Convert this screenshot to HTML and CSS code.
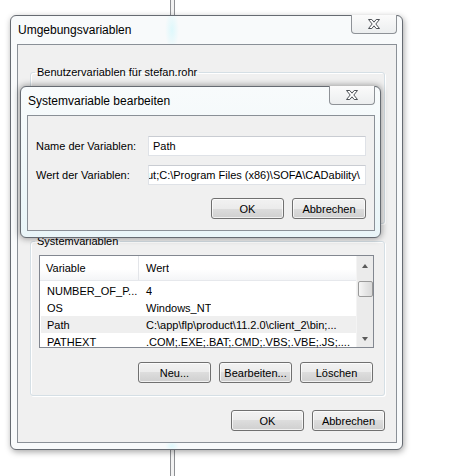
FILE: index.html
```html
<!DOCTYPE html>
<html lang="de">
<head>
    <meta charset="UTF-8">
    <title>Umgebungsvariablen</title>
    <link rel="stylesheet" href="styles.css">
</head>
<body>
    <div class="desk">
        <div class="window">
            <div class="titlebar">
                <span class="title">Umgebungsvariablen</span>
                <div class="close">
                    <svg width="12" height="10" viewBox="0 0 12 10"><path d="M0.5 0.5H3.8L6 3.2L8.2 0.5H11.5L7.8 5L11.5 9.5H8.2L6 6.8L3.8 9.5H0.5L4.2 5Z" fill="#fff" stroke="#4d5156" stroke-width="1" stroke-linejoin="round"/></svg>
                </div>
            </div>
            <div class="client">
                <fieldset class="group group-user">
                    <legend>Benutzervariablen für stefan.rohr</legend>
                </fieldset>

                <fieldset class="group group-system">
                    <legend>Systemvariablen</legend>
                    <div class="list">
                        <div class="list-body">
                            <div class="list-head">
                                <div class="col col-name">Variable</div>
                                <div class="col col-value">Wert</div>
                            </div>
                            <div class="row">
                                <div class="col col-name">NUMBER_OF_P...</div>
                                <div class="col col-value">4</div>
                            </div>
                            <div class="row">
                                <div class="col col-name">OS</div>
                                <div class="col col-value">Windows_NT</div>
                            </div>
                            <div class="row row-selected">
                                <div class="col col-name">Path</div>
                                <div class="col col-value">C:\app\flp\product\11.2.0\client_2\bin;...</div>
                            </div>
                            <div class="row">
                                <div class="col col-name">PATHEXT</div>
                                <div class="col col-value">.COM;.EXE;.BAT;.CMD;.VBS;.VBE;.JS;....</div>
                            </div>
                        </div>
                        <div class="scrollbar">
                            <span class="arrow arrow-up"></span>
                            <span class="thumb"></span>
                            <span class="arrow arrow-down"></span>
                        </div>
                    </div>
                    <div class="actions">
                        <button class="button">Neu...</button>
                        <button class="button">Bearbeiten...</button>
                        <button class="button">Löschen</button>
                    </div>
                </fieldset>

                <div class="actions actions-main">
                    <button class="button">OK</button>
                    <button class="button">Abbrechen</button>
                </div>
            </div>

            <!-- modal dialog on top of the window -->
            <div class="window dialog">
                <div class="titlebar">
                    <span class="title">Systemvariable bearbeiten</span>
                    <div class="close">
                        <svg width="12" height="10" viewBox="0 0 12 10"><path d="M0.5 0.5H3.8L6 3.2L8.2 0.5H11.5L7.8 5L11.5 9.5H8.2L6 6.8L3.8 9.5H0.5L4.2 5Z" fill="#fff" stroke="#4d5156" stroke-width="1" stroke-linejoin="round"/></svg>
                    </div>
                </div>
                <div class="client dialog-client">
                    <div class="form">
                        <label class="form-label">Name der Variablen:</label>
                        <div class="field">Path</div>
                        <label class="form-label">Wert der Variablen:</label>
                        <div class="field field-scrolled"><span>ut;C:\Program Files (x86)\SOFA\CADability\</span></div>
                    </div>
                    <div class="actions actions-dialog">
                        <button class="button">OK</button>
                        <button class="button">Abbrechen</button>
                    </div>
                </div>
            </div>
        </div>
    </div>
</body>
</html>
```

FILE: styles.css
```css
body {
    margin: 0;
    background: #fff;
    font-family: "Liberation Sans", Arial, sans-serif;
    font-size: 11px;
    line-height: 16px;
    color: #000;
}

.desk {
    width: 456px;
    height: 476px;
    padding-top: 15px;
    box-sizing: border-box;
    overflow: hidden;
    background-image: linear-gradient(to right,
        transparent 170px, #8d8f93 170px, #8d8f93 171px,
        #f2f2f2 171px, #f2f2f2 174px,
        #8d8f93 174px, #8d8f93 175px, transparent 175px);
}

.window {
    position: relative;
    margin-left: 10px;
    width: 393px;
    height: 435px;
    box-sizing: border-box;
    padding: 0 5px 6px 6px;
    border: 1px solid #666b72;
    border-radius: 6px;
    background-color: #f8fafb;
    background-image:
        radial-gradient(7px 20px at 161px 14px, rgba(200, 246, 252, 0.55), transparent),
        radial-gradient(7px 5px at 161px 430px, rgba(200, 246, 252, 0.55), transparent);
    box-shadow: 1px 2px 6px rgba(0, 0, 0, 0.35);
}

.titlebar {
    display: flex;
    align-items: flex-start;
    height: 28px;
}

.title {
    padding: 6px 0 0 1px;
    font-size: 12px;
}

.close {
    margin-left: auto;
    margin-top: -1px;
    width: 46px;
    height: 19px;
    box-sizing: border-box;
    display: flex;
    align-items: center;
    justify-content: center;
    border: 1px solid #8e9297;
    border-top: none;
    border-radius: 0 0 4px 4px;
    background: linear-gradient(#fbfbfb, #eceeef);
}

.client {
    height: 399px;
    box-sizing: border-box;
    border: 1px solid #8a9097;
    background: #f0f0f0;
    padding: 19px 11px 0 12px;
}

.group {
    margin: 0;
    padding: 6px 10px 12px 8px;
    border: 1px solid #d5dfe5;
    border-radius: 3px;
    box-shadow: inset 1px 1px 0 #fff, 1px 1px 0 #fff;
    min-width: 0;
}

.group legend {
    margin-left: -4px;
    padding: 0 2px;
}

.group-user {
    height: 160px;
    box-sizing: border-box;
    margin-bottom: 9px;
}

.list {
    display: flex;
    height: 93px;
    box-sizing: border-box;
    border: 1px solid #828790;
    background: #fff;
}

.list-body {
    flex: 1;
    min-width: 0;
}

.list-head {
    display: flex;
    height: 24px;
    align-items: center;
    background: linear-gradient(#fff 55%, #f4f5f7);
    border-bottom: 1px solid #e6e8ec;
    margin-bottom: 1px;
}

.list-head .col-name {
    border-right: 1px solid #e3e5e9;
    height: 24px;
    line-height: 24px;
}

.row {
    display: flex;
    height: 17px;
    align-items: center;
    margin-left: 1px;
}

.row-selected {
    background: #efefef;
}

.col {
    white-space: nowrap;
    overflow: hidden;
}

.col-name {
    width: 99px;
    flex: none;
    padding-left: 6px;
    box-sizing: border-box;
}

.row .col-name {
    width: 98px;
}

.col-value {
    padding-left: 7px;
}

.scrollbar {
    width: 17px;
    flex: none;
    display: flex;
    flex-direction: column;
    align-items: center;
    background: #ebebeb;
    border-left: 1px solid #f4f4f4;
    box-sizing: border-box;
}

.arrow {
    width: 0;
    height: 0;
    border-left: 3.5px solid transparent;
    border-right: 3.5px solid transparent;
}

.arrow-up {
    margin-top: 8px;
    border-bottom: 4px solid #5a5a5a;
}

.arrow-down {
    margin-top: auto;
    margin-bottom: 6px;
    border-top: 4px solid #5a5a5a;
}

.thumb {
    width: 15px;
    height: 16px;
    margin-top: 13px;
    box-sizing: border-box;
    border: 1px solid #9a9a9a;
    border-radius: 2px;
    background: linear-gradient(to right, #f6f6f6, #e6e6e6 50%, #d9d9d9);
}

.actions {
    display: flex;
    justify-content: flex-end;
    gap: 8px;
    margin-top: 14px;
    margin-right: 1px;
}

.actions-main {
    margin-top: 14px;
    margin-right: 0;
}

.button {
    width: 73px;
    height: 21px;
    padding: 0;
    font: inherit;
    color: #000;
    border: 1px solid #707070;
    border-radius: 3px;
    background: linear-gradient(#f2f2f2, #ebebeb 50%, #dddddd 50%, #cfcfcf);
    box-shadow: inset 0 0 0 1px rgba(255, 255, 255, 0.7);
}

.dialog {
    position: absolute;
    left: 9px;
    top: 70px;
    width: 361px;
    height: 152px;
    margin: 0;
    background-color: #f1f8fa;
    background-image: linear-gradient(#f8fbfc, #e9f5f8);
    box-shadow: 0 0 6px 1px rgba(0, 0, 0, 0.35);
}

.dialog-client {
    height: 116px;
    padding: 20px 8px 0 8px;
}

.form {
    display: grid;
    grid-template-columns: 112px 1fr;
    row-gap: 9px;
    align-items: center;
}

.field {
    height: 20px;
    box-sizing: border-box;
    border: 1px solid #dfe2e7;
    border-top-color: #c9ccd2;
    background: #fff;
    padding: 1px 4px;
    white-space: nowrap;
    overflow: hidden;
}

.field-scrolled {
    padding-left: 1px;
}

.field-scrolled span {
    margin-left: -3px;
}

.actions-dialog {
    margin-top: 13px;
    margin-right: 0;
}

.actions-dialog .button:last-child {
    width: 74px;
}
```
